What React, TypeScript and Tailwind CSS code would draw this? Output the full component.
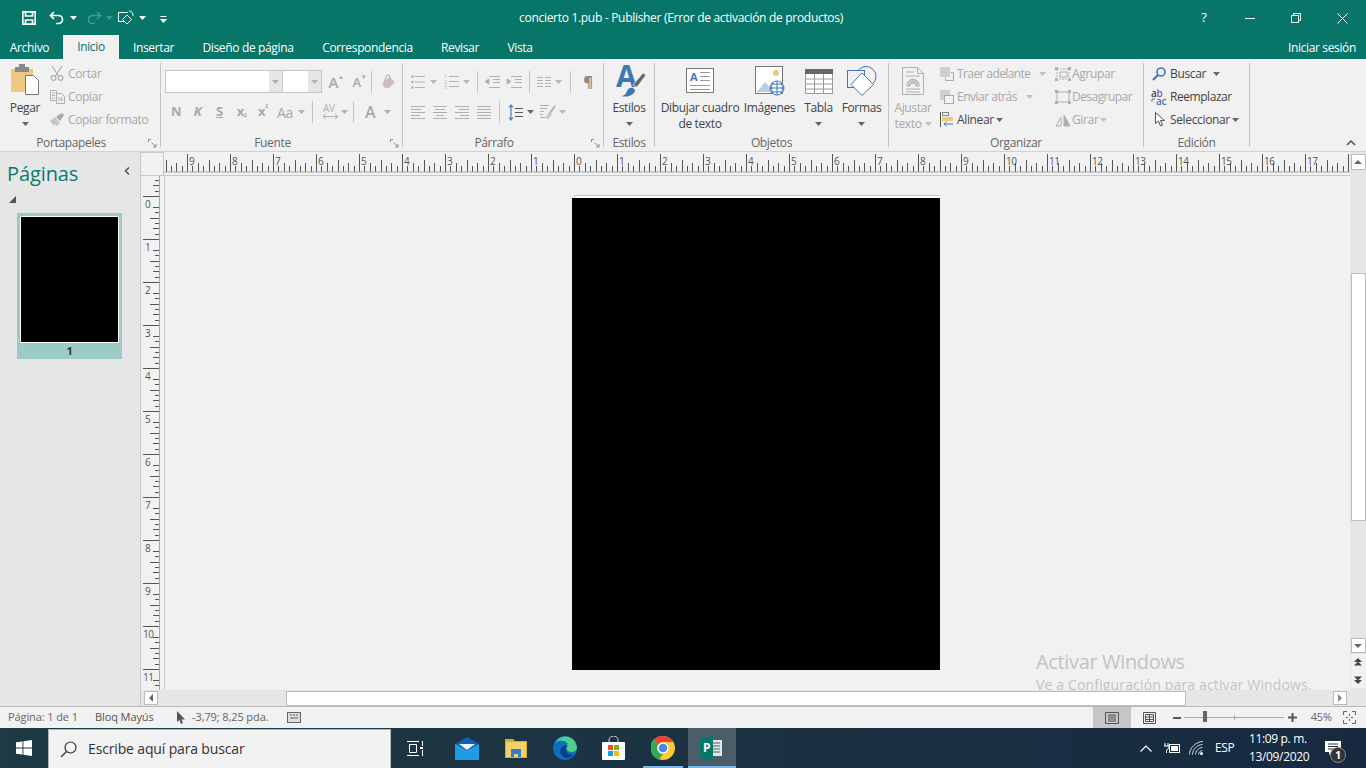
import React from "react";

const Caret = ({ c = "#666" }: { c?: string }) => (
  <svg width="7" height="4" viewBox="0 0 7 4" className="shrink-0"><path d="M0 0h7L3.5 4z" fill={c} /></svg>
);
const G = "#b0b0b0";
const Sep = () => <div className="w-px my-[4px] bg-[#c6c6c6] shrink-0" />;
const VSep = () => <div className="w-px h-[22px] bg-[#c6c6c6]" />;
const Launcher = () => (
  <svg width="9" height="9" viewBox="0 0 9 9" className="absolute right-[3px] top-[4px]" fill="none" stroke="#8a8a8a">
    <path d="M.5 3V.5H3M3.5 3.5l4 4M8 5v3H5" />
  </svg>
);
const Group = ({ w, label, launcher, children }: { w: string; label: string; launcher?: boolean; children: React.ReactNode }) => (
  <div className={`${w} shrink-0 flex flex-col`}>
    <div className="h-[76px] flex">{children}</div>
    <div className={`h-[16px] relative flex items-center justify-center text-[#666] leading-none ${launcher ? "pr-[18px]" : ""}`}>
      <span>{label}</span>
      {launcher && <Launcher />}
    </div>
  </div>
);
const Big = ({ w, icon, l1, l2, caret, dim }: { w: string; icon: React.ReactNode; l1: string; l2?: React.ReactNode; caret?: boolean; dim?: boolean }) => (
  <div className={`${w} shrink-0 flex flex-col items-center ${dim ? "text-[#a8a8a8]" : "text-[#444]"}`}>
    <div className="h-[41px] w-full flex items-center justify-center pt-[3px]">{icon}</div>
    <div className="h-[16px] leading-[16px] whitespace-nowrap">{l1}</div>
    {l2 ? <div className="h-[16px] leading-[16px] whitespace-nowrap flex items-center">{l2}</div> : caret ? <div className="h-[16px] flex items-center justify-center"><Caret /></div> : null}
  </div>
);
const Row = ({ icon, text, dim, caret, iw = "w-[18px]", tw, start }: { icon: React.ReactNode; text: string; dim?: boolean; caret?: React.ReactNode; iw?: string; tw?: string; start?: boolean }) => (
  <div className={`h-[23px] flex items-center ${dim ? "text-[#a8a8a8]" : "text-[#444]"}`}>
    <div className={`${iw} shrink-0 flex items-center ${start ? "justify-start" : "justify-center"}`}>{icon}</div>
    <span className={`${tw ?? ""} whitespace-nowrap`}>{text}</span>
    {caret}
  </div>
);

const Lines = ({ kind }: { kind: "l" | "c" | "r" | "j" }) => {
  const d = {
    l: "M0 .5h14M0 3.5h10M0 6.5h14M0 9.5h9M0 12.5h14",
    c: "M0 .5h14M2 3.5h10M0 6.5h14M3 9.5h8M0 12.5h14",
    r: "M0 .5h14M4 3.5h10M0 6.5h14M5 9.5h9M0 12.5h14",
    j: "M0 .5h14M0 3.5h14M0 6.5h14M0 9.5h14M0 12.5h14",
  }[kind];
  return <svg width="14" height="13" fill="none" stroke={G}><path d={d} /></svg>;
};

const HRuler = () => {
  const ticks: React.ReactNode[] = [];
  const labels: React.ReactNode[] = [];
  const zero = 410;
  for (let i = -80; i <= 150; i++) {
    const x = zero + i * 5.375;
    if (x < 0 || x > 1186) continue;
    const m = ((i % 8) + 8) % 8;
    const top = m === 0 ? 2 : m === 4 ? 8 : m % 2 === 0 ? 11 : 14;
    ticks.push(<line key={i} x1={Math.round(x) + 0.5} x2={Math.round(x) + 0.5} y1={top} y2={20} stroke="#555" />);
    if (m === 0 && x < 1170)
      labels.push(
        <text key={i} x={Math.round(x) + 2} y={13} fontSize="10" fill="#555">{Math.abs(i / 8)}</text>
      );
  }
  return (
    <svg width="1186" height="24" className="block">
      {ticks}
      {labels}
      <line x1="0" x2="1186" y1="20" y2="20" stroke="#a8a8a8" />
      <line x1="0" x2="1186" y1="23.5" y2="23.5" stroke="#c8c8c8" />
    </svg>
  );
};
const VRuler = () => {
  const ticks: React.ReactNode[] = [];
  for (let i = -3; i <= 92; i++) {
    const y = 20 + i * 5.375;
    const m = ((i % 8) + 8) % 8;
    const left = m === 0 ? 2 : m === 4 ? 9 : m % 2 === 0 ? 12 : 14;
    if (m === 1) continue;
    ticks.push(<line key={i} x1={left} x2={19} y1={Math.round(y) + 0.5} y2={Math.round(y) + 0.5} stroke="#555" />);
    if (m === 0)
      ticks.push(<rect key={"b" + i} x={i / 8 >= 10 ? 1 : 3} y={Math.round(y) + 3} width={i / 8 >= 10 ? 13 : 9} height="11" fill="#f1f1f1" />);
    if (m === 0)
      ticks.push(<text key={"t" + i} x={i / 8 >= 10 ? 2 : 4} y={Math.round(y) + 12} fontSize="10" fill="#555">{i / 8}</text>);
  }
  return (
    <svg width="25" height="514" className="block shrink-0 border-l border-[#c8c8c8]" viewBox="0 0 24 514">
      {ticks}
      <line x1="18.5" x2="18.5" y1="0" y2="514" stroke="#a8a8a8" />
      <line x1="23.5" x2="23.5" y1="0" y2="514" stroke="#c8c8c8" />
    </svg>
  );
};
const ScrollBtn = ({ children, cls }: { children: React.ReactNode; cls: string }) => (
  <div className={`${cls} bg-white border border-[#bdbdbd] flex items-center justify-center shrink-0`}>{children}</div>
);

export default function App() {
  return (
    <div className="w-[1366px] h-[768px] overflow-hidden flex flex-col bg-[#f1f1f1] text-[12px] font-['Open_Sans','Liberation_Sans',sans-serif] tracking-[-0.35px]">
      {/* title bar */}
      <div className="h-[36px] shrink-0 bg-[#077568] text-white grid grid-cols-[1fr_auto_1fr] items-center">
        <div className="flex items-center pl-[22px]">
          <svg width="14" height="14" viewBox="0 0 14 14" fill="none" stroke="#fff" strokeWidth="1.7"><path d="M.8.8h12.4v12.4H.8z" /><path d="M3.5 1v4h7V1M3.5 13V9h7v4" /></svg>
          <svg width="16" height="14" viewBox="0 0 16 14" fill="none" stroke="#fff" strokeWidth="1.7" className="ml-[13px]"><path d="M5 1 1.5 4.5 5 8M2 4.5h7.5a4 4 0 0 1 0 8H7" /></svg>
          <div className="ml-[5px]"><Caret c="#fff" /></div>
          <svg width="16" height="14" viewBox="0 0 16 14" fill="none" stroke="#3f9a8e" strokeWidth="1.7" className="ml-[9px]"><path d="M11 1l3.5 3.5L11 8M14 4.5H6.5a4 4 0 0 0 0 8H9" /></svg>
          <div className="ml-[4px]"><Caret c="#3f9a8e" /></div>
          <svg width="17" height="17" viewBox="0 0 17 17" fill="none" stroke="#fff" className="ml-[5px]"><path d="M6 11.5H.5v-9H10M11 .8a4.5 4.5 0 0 1 4 5" /><path d="M9 5l4.5 4.5L9 14 4.5 9.5z" /></svg>
          <div className="ml-[4px]"><Caret c="#fff" /></div>
          <svg width="7" height="7" viewBox="0 0 7 7" className="ml-[14px] mt-[2px]"><path d="M.5.5h6" stroke="#fff" /><path d="M0 3h7L3.5 7z" fill="#fff" /></svg>
        </div>
        <div className="text-[12px] pr-[4px] tracking-[-0.3px]">concierto 1.pub - Publisher (Error de activación de productos)</div>
        <div className="flex justify-end items-center pr-[1px]">
          <div className="w-[46px] text-center text-[13px]">?</div>
          <div className="w-[46px] flex justify-center"><div className="w-[10px] h-px bg-white" /></div>
          <div className="w-[46px] flex justify-center">
            <svg width="10" height="10" fill="none" stroke="#fff"><path d="M.5 2.5h7v7h-7zM2.5 2.5v-2h7v7h-2" /></svg>
          </div>
          <div className="w-[46px] flex justify-center">
            <svg width="11" height="11" fill="none" stroke="#fff"><path d="M.5.5l10 10M10.5.5l-10 10" /></svg>
          </div>
        </div>
      </div>
      {/* tabs */}
      <div className="h-[23px] shrink-0 bg-[#077568] text-white flex items-end">
        <div className="w-[63px] h-[23px] flex items-center justify-center pt-[1px] pr-[4px]">Archivo</div>
        <div className="w-[56px] h-[24px] -mt-[1px] bg-[#f1f1f1] text-[#077568] flex items-center justify-center">Inicio</div>
        <div className="w-[69px] h-[23px] flex items-center justify-center">Insertar</div>
        <div className="w-[120px] h-[23px] flex items-center justify-center">Diseño de página</div>
        <div className="w-[119px] h-[23px] flex items-center justify-center">Correspondencia</div>
        <div className="w-[66px] h-[23px] flex items-center justify-center">Revisar</div>
        <div className="w-[54px] h-[23px] flex items-center justify-center">Vista</div>
        <div className="flex-1 h-[23px] flex items-center justify-end pr-[10px]">Iniciar sesión</div>
      </div>
      {/* ribbon */}
      <div className="h-[93px] shrink-0 flex border-b border-[#d2d2d2] bg-[#f1f1f1]">
        <Group w="w-[160px]" label="Portapapeles" launcher>
          <Big w="w-[50px]" l1="Pegar" caret icon={
            <svg width="30" height="34" viewBox="0 0 30 34">
              <rect x="1" y="5" width="22" height="23" fill="#edc87e" />
              <rect x="5" y="3" width="14" height="5" fill="#8a8a8a" /><rect x="9" y="0" width="6" height="4" fill="#8a8a8a" />
              <path d="M15.5 11.5h8l5 5v14h-13z" fill="#fff" stroke="#777" />
            </svg>
          } />
          <div className="pt-[3px]">
            <Row dim start text="Cortar" iw="w-[18px]" icon={<svg width="14" height="15" viewBox="0 0 14 15" fill="none" stroke={G} strokeWidth="1.2"><path d="M2 0l6.5 10M12 0 5.5 10" /><circle cx="3.5" cy="12" r="2.4" /><circle cx="10.5" cy="12" r="2.4" /></svg>} />
            <Row dim start text="Copiar" icon={<svg width="15" height="14" viewBox="0 0 15 14" fill="none" stroke={G}><path d="M.5.5h6v10h-6zM6.5 3.5h5l3 3v7h-8zM2 3h3M2 5.5h3M2 8h3M8 8h5M8 10h5" /></svg>} />
            <Row dim start text="Copiar formato" icon={<svg width="16" height="14" viewBox="0 0 16 14"><path d="M0 8l5-4 5 6-3 3-2-2-1 2z" fill="#c6c6c6" /><path d="M6 4l6-4 2 2-4 6z" fill="#a8a8a8" /></svg>} />
          </div>
        </Group>
        <Sep />
        <Group w="w-[241px]" label="Fuente" launcher>
          <div className="pl-[4px] pt-[11px] flex flex-col gap-[7px]">
            <div className="h-[23px] flex items-center">
              <div className="w-[118px] h-[23px] bg-white border border-[#c6c6c6] flex justify-end">
                <div className="w-[13px] bg-[#e6e6e6] flex items-center justify-center"><Caret c="#b0b0b0" /></div>
              </div>
              <div className="w-[39px] h-[23px] bg-white border border-[#c6c6c6] border-l-0 flex justify-end">
                <div className="w-[13px] bg-[#e6e6e6] flex items-center justify-center"><Caret c="#b0b0b0" /></div>
              </div>
              <div className="w-[24px] ml-[2px] flex justify-center items-start text-[15px] leading-[20px] text-[#a8a8a8] font-semibold">A<span className="text-[6px] leading-[10px]">▲</span></div>
              <div className="w-[23px] flex justify-center items-start text-[13px] leading-[20px] text-[#a8a8a8] font-semibold">A<span className="text-[6px] leading-[10px]">▼</span></div>
              <div className="w-[5px]"><VSep /></div>
              <div className="w-[24px] flex justify-center">
                <svg width="15" height="15" viewBox="0 0 15 15"><path d="M1 10 8 3l6 5-6 6H4z" fill="#cdbcc4" /><path d="M3 8l3-7h2l2 5" fill="none" stroke="#a8a8a8" /></svg>
              </div>
            </div>
            <div className="h-[24px] flex items-center text-[#a8a8a8] font-bold text-[13px]">
              <div className="w-[22px] text-center">N</div>
              <div className="w-[21px] text-center italic">K</div>
              <div className="w-[23px] text-center underline">S</div>
              <div className="w-[21px] text-center">x<span className="text-[7px]">₂</span></div>
              <div className="w-[22px] text-center">x<span className="text-[8px] align-top">²</span></div>
              <div className="w-[32px] flex items-center justify-start pl-[3px] gap-[5px] font-normal text-[14px]">Aa<Caret c="#b0b0b0" /></div>
              <div className="w-[12px] flex justify-center"><VSep /></div>
              <div className="w-[34px] flex items-center justify-center gap-[3px] font-normal">
                <svg width="15" height="18" viewBox="0 0 15 18" fill="none" stroke={G} className="overflow-visible">
                  <text x="0" y="9" fontSize="10" fill={G} stroke="none">AV</text>
                  <path d="M0 13.5h15M3 11l-3 2.5L3 16M12 11l3 2.5-3 2.5" />
                </svg>
                <Caret c="#b0b0b0" />
              </div>
              <div className="w-[3px] flex justify-center"><VSep /></div>
              <div className="w-[36px] flex items-center justify-start pl-[10px] gap-[9px] text-[16px] font-semibold">A<Caret c="#b0b0b0" /></div>
            </div>
          </div>
        </Group>
        <Sep />
        <Group w="w-[200px]" label="Párrafo" launcher>
          <div className="pl-[8px] pt-[11px] flex flex-col gap-[7px]">
            <div className="h-[23px] flex items-center">
              <div className="w-[33px] flex items-center gap-[5px]">
                <svg width="14" height="14" fill="none" stroke={G}><path d="M4 1.5h10M4 7h10M4 12.5h10" /><circle cx="1.5" cy="1.5" r="1.3" fill={G} stroke="none" /><circle cx="1.5" cy="7" r="1.3" fill={G} stroke="none" /><circle cx="1.5" cy="12.5" r="1.3" fill={G} stroke="none" /></svg>
                <Caret c="#b8b8b8" />
              </div>
              <div className="w-[33px] flex items-center gap-[4px]">
                <svg width="15" height="15" fill="none" stroke={G} className="overflow-visible"><text x="0" y="5" fontSize="5" fill={G} stroke="none">1</text><text x="0" y="10" fontSize="5" fill={G} stroke="none">2</text><text x="0" y="15" fontSize="5" fill={G} stroke="none">3</text><path d="M5 2.5h10M5 7.5h10M5 12.5h10" /></svg>
                <Caret c="#b8b8b8" />
              </div>
              <div className="w-[8px]"><VSep /></div>
              <svg width="16" height="12" fill="none" stroke={G} className="ml-[-1px]"><path d="M5 .5h11M9 3.5h7M9 6.5h7M5 11.5h11" /><path d="M5 3 1 5.5 5 8z" fill={G} /></svg>
              <svg width="16" height="12" fill="none" stroke={G} className="ml-[6px]"><path d="M5 .5h11M9 3.5h7M9 6.5h7M5 11.5h11" /><path d="M1 3l4 2.5L1 8z" fill={G} /></svg>
              <div className="w-[7px] ml-[7px]"><VSep /></div>
              <div className="w-[32px] ml-[1px] flex items-center gap-[4px]">
                <svg width="14" height="12" fill="none" stroke={G}><path d="M0 1.5h6M8 1.5h6M0 4.5h6M8 4.5h6M0 7.5h6M8 7.5h6M0 10.5h6M8 10.5h6" /></svg>
                <Caret c="#b8b8b8" />
              </div>
              <div className="w-[8px] ml-[1px]"><VSep /></div>
              <div className="w-[20px] text-center text-[15px] font-bold text-[#8a8a8a]">¶</div>
            </div>
            <div className="h-[24px] flex items-center">
              <div className="w-[22px]"><Lines kind="l" /></div>
              <div className="w-[22px]"><Lines kind="c" /></div>
              <div className="w-[22px]"><Lines kind="r" /></div>
              <div className="w-[22px]"><Lines kind="j" /></div>
              <div className="w-[9px]"><VSep /></div>
              <div className="w-[32px] flex items-center gap-[4px]">
                <svg width="15" height="17" fill="none" stroke="#4a7fb5" strokeWidth="1.2"><path d="M3 1v15M1 3.5 3 1l2 2.5M1 13.5 3 16l2-2.5" /><path d="M7 4.5h8M7 8.5h8M7 12.5h8" stroke="#555" /></svg>
                <Caret />
              </div>
              <div className="flex items-center gap-[3px]">
                <svg width="16" height="15" viewBox="0 0 16 15" fill="none" stroke={G}><path d="M0 .5h9M0 3.5h7M0 6.5h4M0 9.5h3M0 12.5h8" /><path d="M5 13l4-6 3 2-3 5z" fill="#c8c8c8" stroke="none" /><path d="M10 8l5-7" strokeWidth="2" /></svg>
                <Caret c="#b8b8b8" />
              </div>
            </div>
          </div>
        </Group>
        <Sep />
        <Group w="w-[50px]" label="Estilos">
          <Big w="w-[50px]" l1="Estilos" caret icon={
            <svg width="30" height="32" viewBox="0 0 30 32" className="ml-[3px] overflow-visible">
              <text x="0" y="22" fontSize="30" fontWeight="700" fill="#3f77b5">A</text>
              <path d="M27 8l3 2-9 12-4-2z" fill="#666" stroke="#f1f1f1" strokeWidth=".7" />
              <path d="M5 31c3 0 5-2 6-5 1-3 4-4 6-3l2 2c0 4-6 8-14 6z" fill="#3f77b5" />
            </svg>
          } />
        </Group>
        <Sep />
        <Group w="w-[233px]" label="Objetos">
          <div className="w-[90px] shrink-0">
            <Big w="w-[90px]" l1="Dibujar cuadro" l2="de texto" icon={
              <svg width="29" height="26" viewBox="0 0 29 26" fill="#fff" stroke="#777" className="overflow-visible">
                <rect x=".5" y=".5" width="27" height="24" />
                <text x="4" y="13" fontSize="11" fontWeight="700" fill="#3f77b5" stroke="none">A</text>
                <path d="M14 4.5h10M14 8.5h10M14 12.5h10M4 17.5h20M4 21.5h20" fill="none" stroke="#999" />
              </svg>
            } />
          </div>
          <Big w="w-[49px]" l1="Imágenes" icon={
            <svg width="30" height="30" viewBox="0 0 30 30">
              <rect x=".5" y=".5" width="27" height="27" fill="#fff" stroke="#777" />
              <circle cx="21" cy="7" r="3" fill="#edc87e" />
              <path d="M2 26l8-10 7 7v3z" fill="#b7cde0" />
              <circle cx="22" cy="22" r="7" fill="#fff" stroke="#3f77b5" />
              <path d="M15 22h14M22 15v14M18 16.5c-2 4-2 7 0 11M26 16.5c2 4 2 7 0 11M16.5 18h11M16.5 26h11" fill="none" stroke="#3f77b5" />
            </svg>
          } />
          <Big w="w-[49px]" l1="Tabla" caret icon={
            <svg width="28" height="25" viewBox="0 0 28 25" fill="none" stroke="#999">
              <rect x=".5" y=".5" width="27" height="24" fill="#fff" />
              <rect x="0" y="0" width="28" height="5" fill="#666" stroke="none" />
              <path d="M0 10h28M0 15h28M0 20h28M9.5 5v20M18.5 5v20" />
            </svg>
          } />
          <Big w="w-[37px]" l1="Formas" caret icon={
            <svg width="30" height="30" viewBox="0 0 30 30" fill="none" stroke="#3f77b5">
              <circle cx="19" cy="10.5" r="10" />
              <rect x=".5" y="4.5" width="17" height="17" fill="#f1f1f1" />
              <path d="M15 7l11.5 11.5L15 29.5 4 18.5z" fill="#fff" />
            </svg>
          } />
        </Group>
        <Sep />
        <Group w="w-[254px]" label="Organizar">
          <div className="w-[48px] shrink-0">
            <Big dim w="w-[48px]" l1="Ajustar" l2={<>texto<span className="ml-[3px]"><Caret c="#c0c0c0" /></span></>} icon={
              <svg width="22" height="28" viewBox="0 0 22 28" fill="none" stroke={G}>
                <path d="M.5.5h15l6 6v21H.5zM15.5.5v6h6M4 5h8M4 9h14M4 22h14M4 25h14" />
                <path d="M5 19c0-9 12-9 12 0h-3c0-4-6-4-6 0z" fill="#c8c8c8" />
              </svg>
            } />
          </div>
          <div className="w-[116px] shrink-0 pt-[3px]">
            <Row dim iw="w-[20px]" tw="w-[82px] tracking-[-0.6px]" text="Traer adelante" caret={<Caret c="#c0c0c0" />} icon={<svg width="14" height="14" fill="none"><rect x="0" y="0" width="10" height="10" fill="#cfcfcf" /><path d="M10.5 5.5h3v8h-8v-3" stroke="#aaa" /></svg>} />
            <Row dim iw="w-[20px]" tw="w-[69px] tracking-[-0.5px]" text="Enviar atrás" caret={<Caret c="#c0c0c0" />} icon={<svg width="14" height="14" fill="none"><rect x="0" y="0" width="10" height="10" fill="#cfcfcf" /><rect x="4.5" y="5.5" width="9" height="8" fill="#f1f1f1" stroke="#aaa" /></svg>} />
            <Row iw="w-[20px]" text="Alinear" caret={<div className="ml-[2px]"><Caret /></div>} icon={<svg width="14" height="15" fill="none"><path d="M.5 0v15" stroke="#555" /><rect x="2.5" y=".5" width="6" height="3" stroke="#888" /><rect x="2" y="5" width="11" height="4" fill="#edc87e" /><path d="M13 12H4M6.5 10 4 12l2.5 2" stroke="#3f77b5" /></svg>} />
          </div>
          <div className="w-[90px] shrink-0 pt-[3px]">
            <Row dim iw="w-[19px]" text="Agrupar" icon={<svg width="16" height="14" fill="none" stroke={G}><path d="M2 2h12v10H2z" strokeDasharray="2 1" /><path d="M5 5h7v5H5z" /><rect x="0" y="0" width="3" height="3" fill={G} stroke="none" /><rect x="13" y="0" width="3" height="3" fill={G} stroke="none" /><rect x="0" y="11" width="3" height="3" fill={G} stroke="none" /><rect x="13" y="11" width="3" height="3" fill={G} stroke="none" /></svg>} />
            <Row dim iw="w-[19px]" tw="tracking-[-0.55px]" text="Desagrupar" icon={<svg width="16" height="14" fill="none" stroke={G}><path d="M2 2h12v10H2z" /><rect x="0" y="0" width="3" height="3" fill={G} stroke="none" /><rect x="13" y="0" width="3" height="3" fill={G} stroke="none" /><rect x="0" y="11" width="3" height="3" fill={G} stroke="none" /><rect x="13" y="11" width="3" height="3" fill={G} stroke="none" /></svg>} />
            <Row dim iw="w-[19px]" text="Girar" caret={<div className="ml-[2px]"><Caret c="#c0c0c0" /></div>} icon={<svg width="16" height="14" fill="none" stroke={G}><path d="M1 13L6 4v9z" /><path d="M9 13l0-11 6 11z" fill={G} /></svg>} />
          </div>
        </Group>
        <Sep />
        <Group w="w-[105px]" label="Edición">
          <div className="pl-[8px] pt-[3px]">
            <Row start iw="w-[18px]" tw="w-[43px]" text="Buscar" caret={<Caret />} icon={<svg width="14" height="14" viewBox="0 0 14 14" fill="none" stroke="#3f77b5" strokeWidth="1.6"><circle cx="9" cy="5" r="4" /><path d="M6 8 1 13" strokeWidth="2.2" /></svg>} />
            <Row start iw="w-[18px]" tw="tracking-[-0.45px]" text="Reemplazar" icon={<svg width="16" height="16" viewBox="0 0 16 16" className="overflow-visible -ml-[1px]"><text x="0" y="7.5" fontSize="10" fontWeight="600" fill="#444">a<tspan fill="#8b4fa8">b</tspan></text><text x="5" y="15.5" fontSize="10" fontWeight="600" fill="#3f77b5">ac</text><path d="M4 10H1v3" fill="none" stroke="#3f77b5" /></svg>} />
            <Row start iw="w-[18px]" tw="w-[62px]" text="Seleccionar" caret={<Caret />} icon={<svg width="10" height="15" viewBox="0 0 10 15" fill="#fff" stroke="#555" className="ml-[3px]"><path d="M.5.5v11l3-2.5 2 5 2-1-2-4.5h4z" /></svg>} />
          </div>
        </Group>
        <Sep />
        <div className="flex-1 flex items-end justify-end pr-[10px] pb-[5px]">
          <svg width="10" height="6" fill="none" stroke="#555" strokeWidth="1.5"><path d="M1 5l4-4 4 4" /></svg>
        </div>
      </div>
      {/* main */}
      <div className="flex-1 min-h-0 flex">
        <div className="w-[140px] shrink-0 bg-[#e6e6e6] flex flex-col">
          <div className="h-[44px] pl-[7px] flex items-center justify-between pr-[10px]">
            <span className="text-[20px] text-[#0a7a6c] tracking-[-0.1px] leading-none">Páginas</span>
            <svg width="6" height="8" className="mb-[6px]" fill="none" stroke="#555" strokeWidth="1.6"><path d="M5 .5 1.5 4 5 7.5" /></svg>
          </div>
          <div className="pl-[9px]"><svg width="7" height="7"><path d="M7 0v7H0z" fill="#555" /></svg></div>
          <div className="ml-[17px] mt-[10px] w-[105px] h-[146px] bg-[#9ccbc5] flex flex-col items-center pt-[3px]">
            <div className="w-[99px] h-[127px] bg-black border border-white" />
            <div className="h-[16px] leading-[16px] font-bold text-[11px] text-[#333]">1</div>
          </div>
        </div>
        <div className="flex-1 min-w-0 flex flex-col">
          <div className="flex-1 min-h-0 flex">
            <div className="flex-1 min-w-0 flex flex-col">
              <div className="h-[24px] shrink-0 flex">
                <div className="w-[24px] h-[24px] border border-[#c8c8c8] bg-[#f1f1f1] shrink-0" />
                <HRuler />
              </div>
              <div className="flex-1 min-h-0 flex">
                <VRuler />
                <div className="relative flex-1 min-w-0 overflow-hidden pl-[407px] pt-[19px]">
                  <div className="w-[368px] h-[3px] pl-[2px]">
                    <div className="h-[3px] border-t border-l border-[#c6c6c6] bg-white" />
                  </div>
                  <div className="w-[368px] h-[472px] bg-black" />
                  <div className="absolute left-[871px] top-[473px] text-[#c3c3c3] whitespace-nowrap">
                    <div className="text-[20px] leading-[26px] tracking-[-0.35px]">Activar Windows</div>
                    <div className="text-[14px] leading-[20px] tracking-[0.15px]">Ve a Configuración para activar Windows.</div>
                  </div>
                </div>
              </div>
            </div>
            <div className="w-[16px] shrink-0 bg-[#e6e6e6] flex flex-col items-center pt-[2px]">
              <ScrollBtn cls="w-[15px] h-[16px]"><svg width="8" height="4"><path d="M0 4h8L4 0z" fill="#666" /></svg></ScrollBtn>
              <div className="w-[15px] h-[248px] mt-[103px] bg-white border border-[#bdbdbd] shrink-0" />
              <div className="flex-1" />
              <ScrollBtn cls="w-[15px] h-[15px]"><svg width="8" height="4"><path d="M0 0h8L4 4z" fill="#666" /></svg></ScrollBtn>
              <div className="w-[15px] h-[17px] mt-[1px] bg-[#f1f1f1] flex items-center justify-center"><svg width="8" height="9" fill="#444"><path d="M4 0l4 4H0zM4 3.5l4 4H0z" /></svg></div>
              <div className="w-[15px] h-[17px] mb-[2px] bg-[#f1f1f1] flex items-center justify-center"><svg width="8" height="9" fill="#444"><path d="M4 9l4-4H0zM4 5.5l4-4H0z" /></svg></div>
            </div>
          </div>
          <div className="h-[16px] shrink-0 bg-[#e6e6e6] flex items-center pl-[3px] border-l border-[#c8c8c8]">
            <ScrollBtn cls="w-[14px] h-[14px]"><svg width="4" height="8"><path d="M4 0v8L0 4z" fill="#666" /></svg></ScrollBtn>
            <div className="ml-[128px] w-[900px] h-[15px] bg-white border border-[#bdbdbd] shrink-0" />
            <div className="ml-[147px]"><ScrollBtn cls="w-[14px] h-[14px]"><svg width="4" height="8"><path d="M0 0v8l4-4z" fill="#888" /></svg></ScrollBtn></div>
          </div>
        </div>
      </div>
      {/* status */}
      <div className="h-[22px] shrink-0 bg-[#f1f1f1] border-t border-[#b8b8b8] flex items-center text-[#666] text-[11px] tracking-[-0.1px]">
        <div className="w-[95px] pl-[8px]">Página: 1 de 1</div>
        <div className="w-[82px] text-[#555]">Bloq Mayús</div>
        <svg width="8" height="13" viewBox="0 0 8 13"><path d="M0 0v11l2.5-2 1.5 4 2-1-1.5-3.5H8z" fill="#555" /></svg>
        <div className="ml-[7px] w-[95px] whitespace-nowrap">-3,79; 8,25 pda.</div>
        <svg width="14" height="11" fill="none" stroke="#666"><rect x=".5" y=".5" width="13" height="10" fill="#ddd" /><path d="M3 3h2M6 3h2M9 3h2M3 6h8" /></svg>
        <div className="flex-1" />
        <div className="w-[38px] h-full bg-[#c6c6c6] flex items-center justify-center">
          <svg width="14" height="12" fill="none" stroke="#555"><path d="M.5.5h13v11H.5zM3 3h8M3 5h8M3 7h8M3 9h8" /></svg>
        </div>
        <div className="w-[36px] flex justify-center">
          <svg width="13" height="12" fill="none" stroke="#555"><path d="M.5.5h12v11H.5zM2.5 2.5h8v7h-8zM6.5 2.5v7M2.5 5h8M2.5 7.5h8" /></svg>
        </div>
        <div className="w-[4px]" />
        <div className="w-[8px] h-[2px] bg-[#555] ml-[2px]" />
        <div className="relative w-[100px] h-[1px] bg-[#a8a8a8] ml-[3px]">
          <div className="absolute left-[19px] -top-[6px] w-[4px] h-[11px] bg-[#666]" />
          <div className="absolute left-[50px] -top-[2px] w-px h-[5px] bg-[#a8a8a8]" />
        </div>
        <svg width="9" height="9" className="ml-[4px]" fill="none" stroke="#555" strokeWidth="2"><path d="M0 4.5h9M4.5 0v9" /></svg>
        <div className="w-[36px] pr-[1px] text-right text-[#666]">45%</div>
        <div className="w-[33px] flex justify-center">
          <svg width="13" height="13" fill="none" stroke="#666"><path d="M.5 4V.5H4M9 .5h3.5V4M12.5 9v3.5H9M4 12.5H.5V9M6.5 3v2M6.5 8v2M3 6.5h2M8 6.5h2" /></svg>
        </div>
      </div>
      {/* taskbar */}
      <div className="h-[40px] shrink-0 bg-linear-to-r from-[#1f3a44] to-[#172a40] flex items-center text-white">
        <div className="w-[48px] flex justify-center">
          <svg width="16" height="16" fill="#fff"><path d="M0 2.3 6.5 1.4v6.2H0zM7.4 1.3 16 0v7.6H7.4zM0 8.4h6.5v6.2L0 13.7zM7.4 8.4H16V16l-8.6-1.3z" /></svg>
        </div>
        <div className="w-[343px] h-[39px] mt-px bg-[#f2f2f2] border-t border-x border-[#b5b5b5] flex items-center text-[#333] shrink-0 pl-[11px]">
          <svg width="17" height="17" viewBox="0 0 17 17" fill="none" stroke="#333" strokeWidth="1.2"><circle cx="10.5" cy="6.5" r="5.5" /><path d="M6.5 10.5 1 16" /></svg>
          <span className="ml-[11px] mb-[1px] text-[14px] tracking-[-0.15px]">Escribe aquí para buscar</span>
        </div>
        <div className="w-[49px] ml-[-1px] flex justify-center pl-[1px]">
          <svg width="17" height="15" fill="none" stroke="#fff"><path d="M0 .5h12M2.5 3.5h7v8h-7zM0 14.5h12M15.5 0v5M15.5 9v6" /><rect x="13" y="6" width="3" height="2" fill="#fff" stroke="none" /></svg>
        </div>
        <div className="w-[50px] ml-[3px] flex justify-center">
          <svg width="24" height="23" viewBox="0 0 24 23"><path d="M0 7h24v16H0z" fill="#27a3e8" /><path d="M0 7l12-7 12 7-12 7z" fill="#0a63b8" /><path d="M4 7h16l-8 6z" fill="#eef3f7" /><path d="M0 8l12 8 12-8v15H0z" fill="#1e9be6" /></svg>
        </div>
        <div className="w-[48px] flex justify-center">
          <svg width="22" height="19" viewBox="0 0 22 19"><path d="M0 0h8l2 2h12v17H0z" fill="#e0aa1e" /><rect x="1" y="3" width="20" height="15" fill="#f5d06c" /><path d="M6 10h10v8h-3v-3H9v3H6z" fill="#2d7dc7" /></svg>
        </div>
        <div className="w-[49px] flex justify-center">
          <svg width="24" height="24" viewBox="0 0 24 24"><circle cx="12" cy="12" r="12" fill="#0f6fbf" /><path d="M2 8C5-2 21-3 24 11c0 5-6 6-9 4-3-3-2-6 0-7C10 3 4 4 2 8z" fill="#4fd08a" /><path d="M14 22C8 22 5 15 9 11c2-2 5-2 6-1-3 1-3 6 1 8 2 1 3 1 5 0-2 3-5 4-7 4z" fill="#0b3f8a" /></svg>
        </div>
        <div className="w-[49px] flex justify-center">
          <svg width="23" height="24" viewBox="0 0 23 24"><path d="M7 6V4a4.5 4 0 0 1 9 0v2" fill="none" stroke="#ddd" /><rect x="0" y="6" width="23" height="18" rx="1" fill="#fff" /><rect x="6" y="9" width="5" height="5" fill="#f25022" /><rect x="12" y="9" width="5" height="5" fill="#7fba00" /><rect x="6" y="15" width="5" height="5" fill="#00a4ef" /><rect x="12" y="15" width="5" height="5" fill="#ffb900" /></svg>
        </div>
        <div className="w-[48px] ml-[1px] h-full flex flex-col items-center justify-end">
          <svg width="24" height="24" viewBox="0 0 24 24" className="mb-[6px]"><circle cx="12" cy="12" r="12" fill="#fcc934" /><path d="M12 0a12 12 0 0 1 10.4 6H12a6 6 0 0 0-5.2 3L3 3a12 12 0 0 1 9-3z" fill="#ea4335" /><path d="M3 3a12 12 0 0 0 5 20.3L12 18a6 6 0 0 1-5.2-9z" fill="#34a853" /><circle cx="12" cy="12" r="5.5" fill="#fff" /><circle cx="12" cy="12" r="4.3" fill="#4285f4" /></svg>
          <div className="w-[40px] h-[2px] bg-[#76b9ed]" />
        </div>
        <div className="w-[48px] h-full bg-[#4b5e68] flex flex-col items-center justify-end ml-[1px]">
          <svg width="24" height="24" viewBox="0 0 24 24" className="mb-[6px] overflow-visible"><path d="M11 4h11v16H11z" fill="#fff" opacity=".85" /><path d="M13 7h7M13 10h7M13 13h7M13 16h7" stroke="#4b5e68" /><path d="M0 2l13-2v24L0 22z" fill="#077568" /><text x="3" y="16" fontSize="12" fontWeight="700" fill="#fff">P</text></svg>
          <div className="w-[48px] h-[2px] bg-[#76b9ed]" />
        </div>
        <div className="flex-1" />
        <svg width="12" height="7" fill="none" stroke="#fff" strokeWidth="1.2" className="mr-[12px]"><path d="M.5 6.5 6 1l5.5 5.5" /></svg>
        <svg width="16" height="11" viewBox="0 0 16 11" fill="none" stroke="#fff" className="mr-[9px]"><rect x="5.5" y="1.5" width="10" height="8" /><rect x="7" y="3" width="7" height="5" fill="#fff" stroke="none" /><path d="M1 0v3M4 0v3M0 3h5v2L2.5 7 2.5 10" /></svg>
        <svg width="15" height="14" viewBox="0 0 15 14" fill="none" stroke="#cfd6da" className="mr-[11px]"><path d="M.5 13.5C.5 7 7 .5 14 .5M3.5 13.5c0-5 5-10 10-10M6.5 13.5c0-3 3-7 7-7M9.5 13.5c0-2 2-4 4-4" /><circle cx="12.5" cy="12.5" r="1.5" fill="#fff" stroke="none" /></svg>
        <div className="text-[12px] w-[27px]">ESP</div>
        <div className="w-[57px] ml-[7px] text-[12px] leading-[18px] whitespace-nowrap">
          <div>11:09 p. m.</div>
          <div>13/09/2020</div>
        </div>
        <div className="w-[60px] pr-[6px] flex justify-center relative">
          <svg width="16" height="14" viewBox="0 0 16 14"><path d="M0 0h16v11H7l-3 3v-3H0z" fill="#fff" /><path d="M3 3h10M3 5.5h10M3 8h7" stroke="#333" /></svg>
          <div className="absolute left-[24px] top-[6px] w-[16px] h-[16px] rounded-full bg-[#333] border border-[#888] text-[11px] leading-[14px] text-center font-bold">1</div>
        </div>
      </div>
    </div>
  );
}
